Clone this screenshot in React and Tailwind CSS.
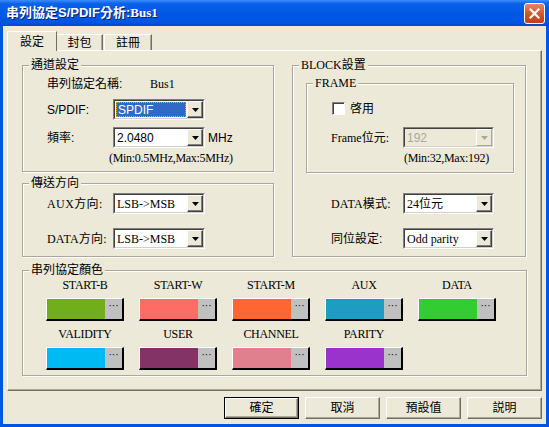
import React from "react";

const SANS = "font-['Liberation_Sans','Noto_Sans_CJK_TC',sans-serif]";
const SERIF = "font-['Liberation_Serif','Noto_Sans_CJK_TC',serif]";

function Arrow({ disabled }) {
  return (
    <svg width="7" height="4" viewBox="0 0 7 4">
      <path d="M0 0H7L3.5 4Z" fill={disabled ? "#ACA899" : "#000"} />
    </svg>
  );
}

function Combo({ value, width, selected, disabled, font }) {
  return (
    <div className={`flex h-[21px] ${width} border border-t-[#808080] border-l-[#808080] border-b-white border-r-white`}>
      <div
        className={`flex min-w-0 flex-1 border border-t-[#404040] border-l-[#404040] border-b-[#D4D0C8] border-r-[#D4D0C8] ${
          disabled ? "bg-[#ECE9D8]" : "bg-white"
        }`}
      >
        <div className="flex min-w-0 flex-1 p-[1px]">
          <div
            className={`flex flex-1 items-center whitespace-nowrap pl-[1px] text-[12px] leading-none ${font} ${
              selected
                ? "border border-dotted border-[#D8B040] bg-[#316AC5] text-white"
                : disabled
                ? "text-[#ACA899]"
                : "text-black"
            }`}
          >
            {value}
          </div>
        </div>
        <div
          className={`flex w-[16px] items-center justify-center border border-t-white border-l-white ${
            disabled
              ? "border-b-[#ACA899] border-r-[#ACA899] bg-[#ECE9D8]"
              : "border-b-[#404040] border-r-[#404040] bg-[#ECE9D8] shadow-[inset_-1px_-1px_0_#808080]"
          }`}
        >
          <Arrow disabled={disabled} />
        </div>
      </div>
    </div>
  );
}

function Group({ title, titleFont, className, children }) {
  return (
    <div className={`relative border border-[#ACA899] shadow-[inset_1px_1px_0_#fff,1px_1px_0_#fff] ${className}`}>
      <span
        className={`absolute left-[6px] top-[-9px] bg-[#ECE9D8] px-[2px] text-[12px] leading-[16px] text-black ${titleFont || SANS}`}
      >
        {title}
      </span>
      {children}
    </div>
  );
}

function Swatch({ label, color }) {
  return (
    <div className="flex w-[78px] flex-col items-center">
      <div className={`h-[14px] whitespace-nowrap text-[12px] leading-[14px] tracking-[-0.3px] text-black ${SERIF}`}>{label}</div>
      <div className="mt-[6px] flex h-[23px] w-[78px] border-t border-l border-r-2 border-b-2 border-t-white border-l-white border-r-black border-b-black">
        <div className="flex-1" style={{ backgroundColor: color }} />
        <div className={`flex w-[17px] items-start justify-center bg-[#C0C0C0] pt-[2px] text-[10px] leading-[10px] text-black ${SANS}`}>
          ···
        </div>
      </div>
    </div>
  );
}

function Button({ label, isDefault }) {
  return (
    <div className={`h-[22px] w-[75px] ${isDefault ? "border border-black" : ""}`}>
      <div
        className={`flex h-full w-full items-center justify-center border border-t-white border-l-white border-b-[#716F64] border-r-[#716F64] bg-[#ECE9D8] shadow-[inset_-1px_-1px_0_#ACA899] text-[12px] text-black ${SANS}`}
      >
        {label}
      </div>
    </div>
  );
}

const colors1 = [
  ["START-B", "#72AE1C"],
  ["START-W", "#FD6D65"],
  ["START-M", "#FF6633"],
  ["AUX", "#1E9DC2"],
  ["DATA", "#33CC33"],
];
const colors2 = [
  ["VALIDITY", "#00BBF3"],
  ["USER", "#833366"],
  ["CHANNEL", "#E0808F"],
  ["PARITY", "#9933CC"],
];

export default function App() {
  return (
    <div className={`flex h-[427px] w-[549px] flex-col bg-[#0055E5] ${SANS}`}>
      {/* Title bar */}
      <div className="flex h-[26px] items-center justify-between bg-[linear-gradient(180deg,#3C8DF8_0%,#0A62EA_14%,#0058E6_50%,#0055E3_86%,#0048CC_100%)] pl-[6px] pr-[4px]">
        <span className="text-[13px] font-bold text-white [text-shadow:1px_1px_0_#0A1E6A]">
          串列協定S/PDIF分析:<span className={SERIF}>Bus1</span>
        </span>
        <div className="flex h-[21px] w-[21px] items-center justify-center rounded-[3px] border border-white bg-[linear-gradient(180deg,#E8846A_0%,#D9552E_50%,#C23D16_100%)]">
          <svg width="11" height="11" viewBox="0 0 11 11">
            <path d="M1.5 1.5L9.5 9.5M9.5 1.5L1.5 9.5" stroke="#fff" strokeWidth="2.2" strokeLinecap="square" />
          </svg>
        </div>
      </div>

      {/* Body */}
      <div className="mx-[3px] mb-[3px] flex flex-1 flex-col bg-[#ECE9D8] px-[4px] pt-[5px]">
        {/* Tabs */}
        <div className="relative z-10 flex h-[19px] items-end">
          <div className="-mb-px flex h-[20px] w-[50px] items-center justify-center border-t border-l border-r border-t-white border-l-white border-r-[#716F64] bg-[#ECE9D8] text-[12px] text-black">
            設定
          </div>
          <div className="flex h-[16px] w-[46px] items-center justify-center border-t border-r border-t-white border-r-[#716F64] shadow-[inset_-1px_0_0_#ACA899] text-[12px] text-black">
            封包
          </div>
          <div className="ml-px flex h-[16px] w-[48px] items-center justify-center border-t border-l border-r border-t-white border-l-white border-r-[#716F64] shadow-[inset_-1px_0_0_#ACA899] text-[12px] text-black">
            註冊
          </div>
        </div>

        {/* Panel */}
        <div className="h-[341px] w-[535px] border border-t-white border-l-white border-b-[#716F64] border-r-[#716F64] pl-[14px] pt-[14px] shadow-[inset_-1px_-1px_0_#ACA899]">
          <div className="flex gap-[18px]">
            {/* Left column */}
            <div className="flex w-[252px] flex-col gap-[11px]">
              <Group title="通道設定" className="h-[107px]">
                <div className="flex flex-col pl-[24px] pt-[8px] text-[12px] text-black">
                  <div className="flex h-[20px] items-center">
                    <span className="w-[103px]">串列協定名稱:</span>
                    <span className={SERIF}>Bus1</span>
                  </div>
                  <div className="mt-[5px] flex h-[21px] items-center">
                    <span className="w-[66px]">S/PDIF:</span>
                    <Combo value="SPDIF" width="w-[92px]" selected font={SANS} />
                  </div>
                  <div className="mt-[7px] flex h-[21px] items-center">
                    <span className="w-[66px]">頻率:</span>
                    <Combo value="2.0480" width="w-[92px]" font={SANS} />
                    <span className="ml-[3px]">MHz</span>
                  </div>
                  <div className={`mt-[2px] flex h-[16px] items-center pl-[62px] tracking-[-0.3px] ${SERIF}`}>
                    (Min:0.5MHz,Max:5MHz)
                  </div>
                </div>
              </Group>
              <Group title="傳送方向" className="h-[74px]">
                <div className="flex flex-col pl-[24px] pt-[9px] text-[12px] text-black">
                  <div className="flex h-[21px] items-center">
                    <span className={`w-[66px] tracking-[0.4px] ${SERIF}`}>AUX方向:</span>
                    <Combo value="LSB->MSB" width="w-[92px]" font={SERIF} />
                  </div>
                  <div className="mt-[14px] flex h-[21px] items-center">
                    <span className={`w-[66px] tracking-[0.2px] ${SERIF}`}>DATA方向:</span>
                    <Combo value="LSB->MSB" width="w-[92px]" font={SERIF} />
                  </div>
                </div>
              </Group>
            </div>

            {/* Right column */}
            <Group title="BLOCK設置" titleFont={SERIF} className="h-[192px] w-[234px]">
              <div className="flex flex-col pl-[13px] pt-[17px] text-[12px] text-black">
                <Group title="FRAME" titleFont={SERIF} className="h-[90px] w-[208px]">
                  <div className="flex flex-col pl-[24px] pt-[18px]">
                    <div className="flex h-[13px] items-center">
                      <div className="ml-px h-[13px] w-[13px] border border-t-[#808080] border-l-[#808080] border-b-white border-r-white bg-white shadow-[inset_1px_1px_0_#404040]" />
                      <span className="ml-[5px]">啓用</span>
                    </div>
                    <div className="mt-[12px] flex h-[21px] items-center">
                      <span className={`w-[72px] ${SERIF}`}>Frame位元:</span>
                      <Combo value="192" width="w-[91px]" disabled font={SANS} />
                    </div>
                    <div className={`mt-[2px] flex h-[16px] items-center pl-[73px] tracking-[-0.3px] ${SERIF}`}>
                      (Min:32,Max:192)
                    </div>
                  </div>
                </Group>
                <div className="mt-[20px] flex h-[21px] items-center pl-[25px]">
                  <span className={`w-[72px] tracking-[0.2px] ${SERIF}`}>DATA模式:</span>
                  <Combo value="24位元" width="w-[91px]" font={SERIF} />
                </div>
                <div className="mt-[14px] flex h-[21px] items-center pl-[25px]">
                  <span className="w-[72px]">同位設定:</span>
                  <Combo value="Odd parity" width="w-[91px]" font={SERIF} />
                </div>
              </div>
            </Group>
          </div>

          {/* Colors */}
          <Group title="串列協定顏色" className="mt-[13px] h-[106px] w-[505px]">
            <div className="flex flex-col gap-[6px] pl-[23px] pt-[7px]">
              <div className="flex gap-[15px]">
                {colors1.map(([l, c]) => (
                  <Swatch key={l} label={l} color={c} />
                ))}
              </div>
              <div className="flex gap-[15px]">
                {colors2.map(([l, c]) => (
                  <Swatch key={l} label={l} color={c} />
                ))}
              </div>
            </div>
          </Group>
        </div>

        {/* Buttons */}
        <div className="mt-[6px] flex justify-end gap-[6px]">
          <Button label="確定" isDefault />
          <Button label="取消" />
          <Button label="預設值" />
          <Button label="説明" />
        </div>
      </div>
    </div>
  );
}
